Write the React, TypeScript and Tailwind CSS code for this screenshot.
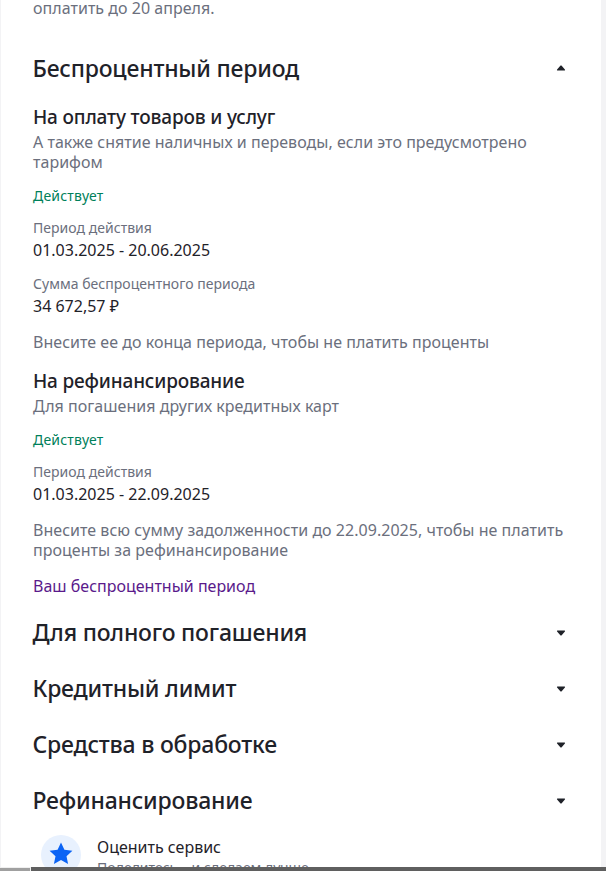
const font = "[font-family:'Noto_Sans',sans-serif]";

const Caret = ({ up }: { up?: boolean }) => (
  <svg width="10" height="6" viewBox="0 0 10 6" className={up ? "" : "rotate-180 mt-[1px]"}>
    <path d="M5 .4c.3 0 .5.1.7.3l3.2 3.700c.4.5.1 1.200-.6 1.200H1.700c-.7 0-1-.7-.6-1.200L4.300.7c.2-.2.4-.3.7-.3z" fill="#1f2229" />
  </svg>
);

const SectionHead = ({ title, up }: { title: string; up?: boolean }) => (
  <div className="flex items-center justify-between h-[32px] pt-[2px]">
    <h2 className="-ml-[0.5px] -mt-[1px] text-[23px] tracking-[-0.2px] leading-[32px] font-medium text-[#1f2229]">{title}</h2>
    <Caret up={up} />
  </div>
);

const Field = ({ label, value }: { label: string; value: string }) => (
  <div className="mt-[12px]">
    <div className="text-[14px] tracking-[0.03px] leading-[20px] text-[#6b6f7d]">{label}</div>
    <div className="text-[16px] leading-[24px] text-[#1f2229]">{value}</div>
  </div>
);

const Muted = ({ children, className }: { children: React.ReactNode; className?: string }) => (
  <p className={"text-[16px] tracking-[0.03px] leading-[20px] text-[#6b6f7d] " + (className ?? "")}>{children}</p>
);

export default function App() {
  return (
    <div className={`h-[871px] overflow-hidden relative bg-[#f3f3f5] ${font}`}>
      <div className="ml-[1px] mr-[5px] h-full bg-white pl-[32px] pr-[35px] overflow-hidden">
        <Muted className="-mt-[2px]">оплатить до 20 апреля.</Muted>

        <div className="mt-[33px]">
          <SectionHead title="Беспроцентный период" up />
        </div>

        <h3 className="mt-[22px] text-[19px] tracking-[-0.16px] leading-[24px] font-medium text-[#1f2229]">На оплату товаров и услуг</h3>
        <Muted className="mt-[3px]">А также снятие наличных и переводы, если это предусмотрено тарифом</Muted>
        <div className="mt-[14px] text-[14px] tracking-[0.2px] leading-[20px] text-[#00805a]">Действует</div>
        <Field label="Период действия" value="01.03.2025 - 20.06.2025" />
        <Field label="Сумма беспроцентного периода" value="34 672,57 ₽" />
        <Muted className="mt-[14px]">Внесите ее до конца периода, чтобы не платить проценты</Muted>

        <h3 className="mt-[17px] text-[19px] tracking-[-0.16px] leading-[24px] font-medium text-[#1f2229]">На рефинансирование</h3>
        <Muted className="mt-[3px]">Для погашения других кредитных карт</Muted>
        <div className="mt-[14px] text-[14px] tracking-[0.2px] leading-[20px] text-[#00805a]">Действует</div>
        <Field label="Период действия" value="01.03.2025 - 22.09.2025" />
        <Muted className="mt-[14px]">Внесите всю сумму задолженности до 22.09.2025, чтобы не платить проценты за рефинансирование</Muted>
        <div className="mt-[16px] text-[16px] leading-[20px] text-[#5a1a8b]">Ваш беспроцентный период</div>

        <div className="mt-[19px] flex flex-col gap-[24px]">
          <SectionHead title="Для полного погашения" />
          <SectionHead title="Кредитный лимит" />
          <SectionHead title="Средства в обработке" />
          <SectionHead title="Рефинансирование" />
        </div>

        <div className="mt-[20px] ml-[8px] flex gap-[16px]">
          <div className="w-[40px] h-[40px] shrink-0 rounded-full bg-[#e8f1fe] flex items-center justify-center">
            <svg width="24" height="24" viewBox="0 0 24 24" className="-mt-[2px]">
              <path d="M12 .5l3.400 7.300 8 .9-5.900 5.500 1.600 7.900-7.100-4-7.100 4 1.600-7.900L.6 8.700l8-.9z" fill="#0a63f5" />
            </svg>
          </div>
          <div className="pt-[2px]">
            <div className="text-[16px] leading-[20px] text-[#1f2229]">Оценить сервис</div>
            <div className="mt-[1px] text-[14px] leading-[20px] text-[#6b6f7d]">Поделитесь – и сделаем лучше</div>
          </div>
        </div>
      </div>
      <div className="absolute left-0 right-0 bottom-0 h-[4px] bg-[#5f5f5f]">
        <div className="w-[31px] h-full bg-[#a0a0a0] border-t border-r border-[#efefef]" />
      </div>
    </div>
  );
}
